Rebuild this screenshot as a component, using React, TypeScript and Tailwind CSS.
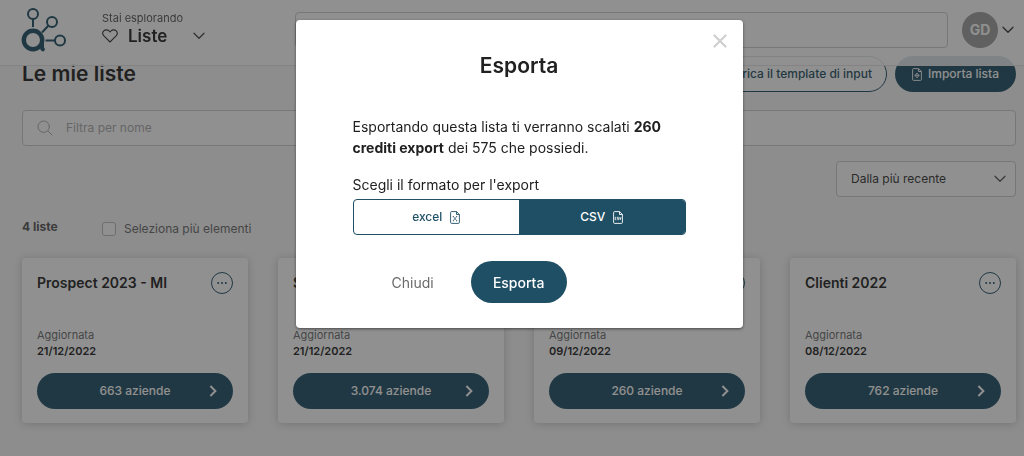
import { useState } from "react";

type IconProps = { className?: string };

function Logo() {
  return (
    <svg viewBox="0 0 46 44" className="h-11 w-[46px] text-[#1f4f64]" fill="none" stroke="currentColor" aria-hidden="true">
      <circle cx="12" cy="6" r="5" strokeWidth="2" />
      <circle cx="31" cy="14" r="5" strokeWidth="2" />
      <circle cx="39" cy="32.6" r="5" strokeWidth="2" />
      <path d="M12 11v8M27.5 17.5 21 24.5M24.5 32.6H34" strokeWidth="2" />
      <circle cx="12" cy="32" r="9.200" strokeWidth="4.400" />
      <path d="M21 31v7.500c0 2 .3 2.900 1.800 3.200" strokeWidth="4" />
      <path d="M21.600 41.300h.6" strokeWidth="3.400" strokeLinecap="round" />
    </svg>
  );
}

function Chevron({ className }: IconProps) {
  return (
    <svg viewBox="0 0 12 8" className={className} fill="none" stroke="currentColor" strokeWidth="1.3" strokeLinecap="round" strokeLinejoin="round" aria-hidden="true">
      <path d="m1 1.2 5 5 5-5" />
    </svg>
  );
}

function Arrow({ className }: IconProps) {
  return (
    <svg viewBox="0 0 8 12" className={className} fill="none" stroke="currentColor" strokeWidth="2" aria-hidden="true">
      <path d="m1.4 1 5 5-5 5" />
    </svg>
  );
}

function Heart({ className }: IconProps) {
  return (
    <svg viewBox="0 0 16 14" className={className} fill="none" stroke="currentColor" strokeWidth="1.1" strokeLinejoin="round" aria-hidden="true">
      <path d="M8 13 1.9 6.9C.4 5.300 .5 3.200 1.800 1.900 3.600.2 6.300.6 8 3c1.700-2.400 4.400-2.800 6.200-1.100 1.300 1.300 1.400 3.400-.1 5z" />
    </svg>
  );
}

function Search({ className }: IconProps) {
  return (
    <svg viewBox="0 0 16 16" className={className} fill="none" stroke="currentColor" strokeWidth="1" strokeLinecap="round" aria-hidden="true">
      <circle cx="6.700" cy="6.700" r="5.700" />
      <path d="m11 11 4 4" />
    </svg>
  );
}

function FileIcon({ kind }: { kind: "x" | "csv" | "plus" }) {
  return (
    <svg viewBox="0 0 10 13" className="h-[13px] w-2.5" fill="none" stroke="currentColor" strokeWidth="0.9" strokeLinejoin="round" aria-hidden="true">
      <path d="M6.500.6H1.600a1 1 0 0 0-1 1v9.800a1 1 0 0 0 1 1h6.800a1 1 0 0 0 1-1V3.500zV3.500h2.900" />
      {kind === "x" && <path d="m3.300 5.500 3.400 4.300M6.700 5.500 3.300 9.800M2.800 5.500h1.200M6 5.500h1.200M2.800 9.800h1.200M6 9.800h1.200" strokeWidth="0.7" />}
      {kind === "plus" && <path d="m5 5 1 1.300L7.300 7.400 6 8.500 5 9.800 4 8.500 2.700 7.400 4 6.300zM5 5v4.800M2.700 7.400h4.600" strokeWidth="0.7" />}
      {kind === "csv" && (
        <path d="M3.300 6.300H2.200v2.400h1.100M5.700 6.300H4.400v1.200h1.200v1.200H4.300M6.600 6.200l.7 2.500.7-2.500" strokeWidth="0.8" />
      )}
    </svg>
  );
}

const lists = [
  { name: "Prospect 2023 - MI", date: "21/12/2022", count: "663" },
  { name: "S", date: "21/12/2022", count: "3.074" },
  { name: "", date: "09/12/2022", count: "260" },
  { name: "Clienti 2022", date: "08/12/2022", count: "762" },
];

function ListCard({ name, date, count }: (typeof lists)[number]) {
  return (
    <article className="flex flex-col rounded bg-white px-[15px] pt-3.5 pb-3.5 shadow-[0_1px_8px_rgba(0,0,0,0.2)]">
      <div className="flex items-start justify-between">
        <h2 className="text-[14px] leading-[22px] font-semibold whitespace-nowrap">{name}</h2>
        <button type="button" aria-label={`Azioni ${name}`} className="ml-auto flex size-[22px] items-center justify-center rounded-full border border-[#1f4f64] text-[#1f4f64]">
          <svg viewBox="0 0 10 2" className="h-0.5 w-2.5" fill="currentColor" aria-hidden="true">
            <circle cx="1.200" cy="1" r="1" />
            <circle cx="5" cy="1" r="1" />
            <circle cx="8.800" cy="1" r="1" />
          </svg>
        </button>
      </div>
      <p className="mt-[33px] text-[11px] leading-4 text-[#6b6b6b]">Aggiornata</p>
      <p className="text-[11px] leading-4 font-semibold">{date}</p>
      <button type="button" className="mt-3.5 flex h-9 items-center rounded-full bg-[#1f4f64] pr-4 pl-4 text-white">
        <span className="flex-1 pl-2 text-center text-[12px] font-medium">{count} aziende</span>
        <Arrow className="h-3 w-2" />
      </button>
    </article>
  );
}

function ExportDialog() {
  const [format, setFormat] = useState("csv");
  const base = "flex flex-1 items-center justify-center gap-2 text-[12px] font-medium";
  return (
    <div className="fixed inset-0 z-20 flex items-start justify-center bg-[#212121]/50 pt-5 pl-3.5">
      <div role="dialog" aria-modal="true" aria-labelledby="export-title" className="relative w-full max-w-[447px] rounded bg-white px-[57px] pt-8 pb-[25px] shadow-[0_1px_3px_rgba(0,0,0,0.5)]">
        <button type="button" aria-label="Chiudi finestra" className="absolute top-3.5 right-4 text-[#cfcfcf]">
          <svg viewBox="0 0 14 14" className="size-3.5" fill="none" stroke="currentColor" strokeWidth="2.200" strokeLinecap="round" aria-hidden="true">
            <path d="m1.500 1.500 11 11M12.500 1.500l-11 11" />
          </svg>
        </button>
        <h2 id="export-title" className="text-center text-[21px] leading-7 font-semibold">Esporta</h2>
        <p className="mt-9 text-[14px] leading-[21px]">
          Esportando questa lista ti verranno scalati <strong>260 crediti export</strong> dei 575 che possiedi.
        </p>
        <p id="format-label" className="mt-4 text-[14px] leading-[21px]">Scegli il formato per l'export</p>
        <div role="group" aria-labelledby="format-label" className="mt-1 flex h-9 overflow-hidden rounded border border-[#1f4f64]">
          <button type="button" aria-pressed={format === "excel"} onClick={() => setFormat("excel")} className={`${base} ${format === "excel" ? "bg-[#1f4f64] text-white" : "text-[#1f4f64]"}`}>
            excel <FileIcon kind="x" />
          </button>
          <button type="button" aria-pressed={format === "csv"} onClick={() => setFormat("csv")} className={`${base} ${format === "csv" ? "bg-[#1f4f64] text-white" : "text-[#1f4f64]"}`}>
            CSV <FileIcon kind="csv" />
          </button>
        </div>
        <div className="mt-[26px] flex items-center gap-[37px] pl-[39px]">
          <button type="button" className="text-[14px] text-[#6b6b6b]">Chiudi</button>
          <button type="button" className="h-[42px] w-24 rounded-full bg-[#1f4f64] text-[14px] font-medium text-white">Esporta</button>
        </div>
      </div>
    </div>
  );
}

export default function App() {
  return (
    <div className="min-h-screen bg-[#f8f8f8] font-['Inter','Liberation_Sans',sans-serif] text-[#212121]">
      <header className="fixed inset-x-0 top-0 z-10 flex h-[66px] items-center border-b border-[#e4e4e4] bg-white/85 pr-2.5 pl-[21px]">
        <a href="#" aria-label="Home" className="-mt-1.5">
          <Logo />
        </a>
        <button type="button" className="-mt-2.5 ml-[35px] w-[103px] text-left">
          <span className="block text-[11px] leading-4 text-[#555]">Stai esplorando</span>
          <span className="flex items-center leading-5">
            <Heart className="h-3.5 w-4 text-[#333]" />
            <span className="ml-2.5 text-[17px] font-semibold">Liste</span>
            <Chevron className="ml-auto h-2 w-3 text-[#444]" />
          </span>
        </button>
        <input aria-label="Cerca" className="-mt-1.5 ml-[90px] h-9 min-w-0 flex-1 rounded border border-[#ccc] bg-white px-3" />
        <button type="button" aria-label="Profilo" className="-mt-1.5 ml-3.5 flex items-center gap-1">
          <span className="flex size-9 items-center justify-center rounded-full bg-[#9e9e9e] text-[14px] font-bold text-white">GD</span>
          <Chevron className="h-2 w-3 text-[#333]" />
        </button>
      </header>

      <main className="pt-14 pr-2 pb-8 pl-[22px]">
        <div className="flex items-center gap-2">
          <h1 className="flex-1 text-[21px] leading-9 font-semibold">Le mie liste</h1>
          <button type="button" className="h-9 rounded-full border border-[#1f4f64] bg-white px-3.5 text-[12px] font-medium text-[#1f4f64]">Scarica il template di input</button>
          <button type="button" className="flex h-9 w-[121px] items-center justify-center gap-1.5 rounded-full bg-[#1f4f64] text-[12px] font-medium text-white">
            <FileIcon kind="plus" />
            Importa lista
          </button>
        </div>

        <label className="mt-[18px] flex h-9 items-center gap-[13px] rounded border border-[#ccc] bg-white px-3.5">
          <Search className="size-4 text-[#aaa]" />
          <input aria-label="Filtra per nome" placeholder="Filtra per nome" className="min-w-0 flex-1 text-[12px] outline-none placeholder:text-[#aaa]" />
        </label>

        <div className="mt-[15px] flex justify-end">
          <div className="relative w-[180px]">
            <select aria-label="Ordina" className="h-9 w-full appearance-none rounded border border-[#ccc] bg-white px-3.5 text-[12px] text-[#333]">
              <option>Dalla più recente</option>
              <option>Dalla meno recente</option>
            </select>
            <Chevron className="pointer-events-none absolute top-3.5 right-2.5 h-2 w-3 text-[#555]" />
          </div>
        </div>

        <div className="mt-5 flex items-start text-[12px] leading-5 text-[#555]">
          <span className="w-20 font-bold">4 liste</span>
          <label className="mt-0.5 flex items-center gap-2 text-[#6b6b6b]">
            <input type="checkbox" className="size-3.5 appearance-none rounded-[3px] border border-[#bbb] bg-white" />
            Seleziona più elementi
          </label>
        </div>

        <section className="mt-[19px] grid grid-cols-4 gap-[30px]">
          {lists.map((l) => (
            <ListCard key={l.date + l.count} {...l} />
          ))}
        </section>
      </main>

      <ExportDialog />
    </div>
  );
}
